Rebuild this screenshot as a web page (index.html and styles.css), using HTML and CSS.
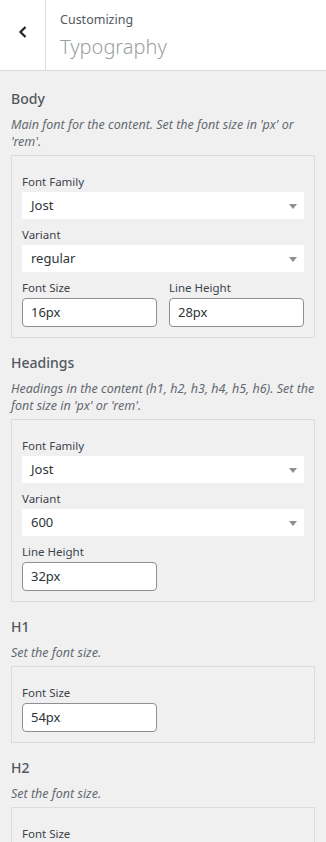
FILE: index.html
```html
<!DOCTYPE html>
<html lang="en">
<head>
    <meta charset="UTF-8">
    <title>Customizing Typography</title>
    <link rel="stylesheet" href="styles.css">
</head>
<body>
    <div class="panel-header">
        <div class="back-btn">
            <svg width="10" height="14" viewBox="0 0 10 14"><path d="M7.5 2 L2.5 7 L7.5 12" fill="none" stroke="#1d2327" stroke-width="2.2"/></svg>
        </div>
        <div class="panel-title">
            <span class="crumb">Customizing</span>
            <span class="title">Typography</span>
        </div>
    </div>

    <div class="sections">
        <div class="section">
            <div class="section-title">Body</div>
            <div class="section-desc">Main font for the content. Set the font size in 'px' or 'rem'.</div>
            <div class="field-box">
                <label class="field-label">Font Family</label>
                <div class="fake-select">Jost<span class="arrow"></span></div>
                <label class="field-label">Variant</label>
                <div class="fake-select">regular<span class="arrow"></span></div>
                <div class="field-row">
                    <div class="field-col">
                        <label class="field-label">Font Size</label>
                        <div class="text-input">16px</div>
                    </div>
                    <div class="field-col">
                        <label class="field-label">Line Height</label>
                        <div class="text-input">28px</div>
                    </div>
                </div>
            </div>
        </div>

        <div class="section">
            <div class="section-title">Headings</div>
            <div class="section-desc">Headings in the content (h1, h2, h3, h4, h5, h6). Set the font size in 'px' or 'rem'.</div>
            <div class="field-box">
                <label class="field-label">Font Family</label>
                <div class="fake-select">Jost<span class="arrow"></span></div>
                <label class="field-label">Variant</label>
                <div class="fake-select">600<span class="arrow"></span></div>
                <div class="field-row">
                    <div class="field-col">
                        <label class="field-label">Line Height</label>
                        <div class="text-input">32px</div>
                    </div>
                    <div class="field-col"></div>
                </div>
            </div>
        </div>

        <div class="section">
            <div class="section-title">H1</div>
            <div class="section-desc">Set the font size.</div>
            <div class="field-box">
                <div class="field-row">
                    <div class="field-col">
                        <label class="field-label">Font Size</label>
                        <div class="text-input">54px</div>
                    </div>
                    <div class="field-col"></div>
                </div>
            </div>
        </div>

        <div class="section">
            <div class="section-title">H2</div>
            <div class="section-desc">Set the font size.</div>
            <div class="field-box">
                <label class="field-label">Font Size</label>
            </div>
        </div>
    </div>
</body>
</html>
```

FILE: styles.css
```css
body {
    margin: 0;
    background-color: #f0f0f1;
    font-family: "Noto Sans", "Open Sans", sans-serif;
    color: #50575e;
    overflow: hidden;
}

.panel-header {
    display: flex;
    height: 70px;
    background-color: #ffffff;
    border-bottom: 1px solid #dcdcde;
}

.back-btn {
    width: 46px;
    border-right: 1px solid #dcdcde;
    display: flex;
    align-items: center;
    justify-content: center;
    padding-bottom: 6px;
    box-sizing: border-box;
}

.panel-title {
    display: flex;
    flex-direction: column;
    padding-left: 14px;
    padding-top: 10px;
}

.crumb {
    font-size: 12.5px;
    line-height: 20px;
    color: #50575e;
}

.title {
    font-size: 20px;
    line-height: 34px;
    font-weight: 300;
    color: #9a9fa4;
}

.sections {
    padding-top: 16px;
}

.section {
    padding: 0 11px;
    margin-bottom: 13px;
}

.section-title {
    font-size: 14px;
    line-height: 24px;
    font-weight: 500;
    color: #50575e;
    margin-bottom: 5px;
}

.section-desc {
    font-size: 12.5px;
    line-height: 17px;
    font-style: italic;
    color: #646970;
    margin-bottom: 5px;
}

.field-box {
    border: 1px solid #dcdcde;
    padding: 18px 10px 10px 10px;
}

.field-label {
    display: block;
    font-size: 11.5px;
    line-height: 16px;
    color: #3c434a;
    margin-bottom: 2px;
}

.fake-select {
    position: relative;
    height: 27px;
    line-height: 27px;
    background-color: #ffffff;
    padding-left: 9px;
    font-size: 13px;
    color: #2c3338;
    margin-bottom: 8px;
}

.fake-select .arrow {
    position: absolute;
    right: 7px;
    top: 12px;
    width: 0;
    height: 0;
    border-left: 4px solid transparent;
    border-right: 4px solid transparent;
    border-top: 5px solid #8c8f94;
}

.field-row {
    display: flex;
    gap: 12px;
}

.field-col {
    flex: 1;
}

.text-input {
    height: 27px;
    line-height: 27px;
    border: 1px solid #8c8f94;
    border-radius: 4px;
    background-color: #ffffff;
    padding-left: 8px;
    font-size: 13px;
    color: #2c3338;
}
```
